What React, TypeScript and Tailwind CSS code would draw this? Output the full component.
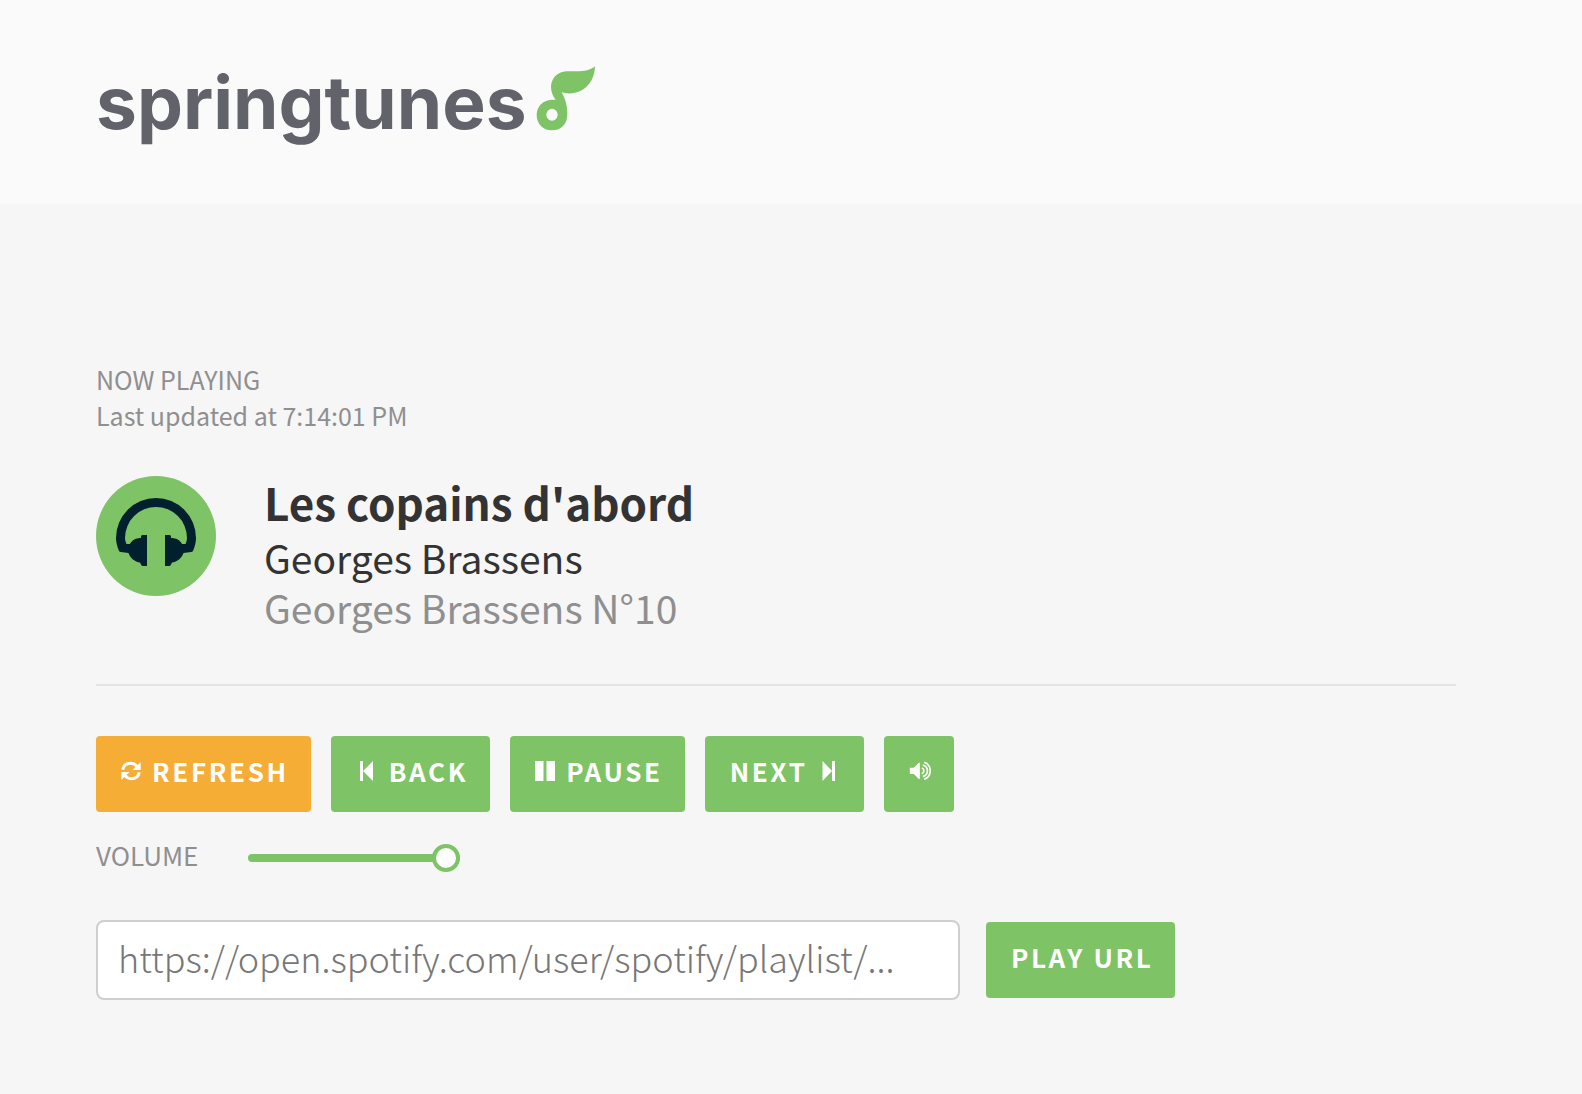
import React, { useState } from "react";

const buttonBase =
  "flex h-[76px] cursor-pointer items-center rounded pr-[22px] pb-1.5 pl-[25px] text-[26px] leading-8 font-semibold tracking-widest whitespace-nowrap text-white uppercase";
const greenButton = `${buttonBase} bg-[#7ec366]`;
const orangeButton = `${buttonBase} bg-[#f5ad35]`;

function LeafNote() {
  return (
    <svg viewBox="46 32 180 195" className="mb-2 ml-[9px] h-[65px] w-[60px]" aria-hidden="true">
      <path
        fill="#7ec366"
        fillRule="evenodd"
        d="M223 33C211 44 190 48 168 48C150 48 140 47 128 49C106 53 91 72 91 95C91 111 98 124 105 134C70 130 48 152 48 179C48 205 67 225 93 225C123 225 140 205 140 176C140 150 134 131 123 111C142 117 166 115 185 104C209 89 222 65 223 33ZM94 160A17 18 0 1 1 94 196A17 18 0 1 1 94 160Z"
      />
    </svg>
  );
}

function Headphones() {
  return (
    <svg viewBox="0 0 120 120" className="size-[120px] shrink-0" aria-hidden="true">
      <circle cx="60" cy="60" r="60" fill="#7ec366" />
      <path
        fill="#00202e"
        d="M23 75C21 70 20 66 20 62A40 40 0 0 1 100 62C100 66 99 70 97 75Q96.500 76 95 76L87.500 77C86 82 81 86 76 86.500L75 88.500Q74.500 90 73 90H69V59H73.500Q75 59 75 60.500V62C80 62 84 64 86 68H89.500C90.500 66 91 64 91 62A31 31 0 0 0 29 62C29 64 29.500 66 30.500 68H34C36 64 40 62 45 62V60.500Q45 59 46.500 59H51V90H47Q45.500 90 45 88.500L44 86.500C39 86 34 82 32.500 77L25 76Q23.500 76 23 75Z"
      />
    </svg>
  );
}

function RefreshIcon() {
  return (
    <svg viewBox="0 0 60 60" className="mr-[11px] size-5" aria-hidden="true">
      <path d="M5 26C8 13 18 7 29 7C37 7 44 11 49 18" fill="none" stroke="white" strokeWidth="9" />
      <path d="M59 3V27H34Z" fill="white" />
      <g transform="rotate(180 30 30)">
        <path d="M5 26C8 13 18 7 29 7C37 7 44 11 49 18" fill="none" stroke="white" strokeWidth="9" />
        <path d="M59 3V27H34Z" fill="white" />
      </g>
    </svg>
  );
}

function BackIcon() {
  return (
    <svg viewBox="0 0 14 20" className="mr-[15px] ml-1 h-5 w-3.5" fill="white" aria-hidden="true">
      <path d="M0 0H3V20H0ZM13 0V20L3 10Z" />
    </svg>
  );
}

function PauseIcon() {
  return (
    <svg viewBox="0 0 20 20" className="mr-[11px] size-5" fill="white" aria-hidden="true">
      <path d="M0 0H8.500V20H0ZM11.500 0H20V20H11.500Z" />
    </svg>
  );
}

function NextIcon() {
  return (
    <svg viewBox="0 0 14 20" className="mr-1.5 ml-3.5 h-5 w-3.5" fill="white" aria-hidden="true">
      <path d="M10 0H13V20H10ZM0.500 0V20L10 10Z" />
    </svg>
  );
}

function SpeakerIcon() {
  return (
    <svg viewBox="0 0 66 60" className="h-5 w-[23px]" fill="none" aria-hidden="true">
      <path d="M1 20H13L28 5H31V54H28L13 39H1Z" fill="white" />
      <path
        d="M37 21A9 9 0 0 1 37 38M40 12A18 18 0 0 1 40 47M44 4A27 27 0 0 1 44 55"
        stroke="white"
        strokeWidth="5"
      />
    </svg>
  );
}

export default function App() {
  const [volume, setVolume] = useState(100);
  const [url, setUrl] = useState("");

  return (
    <div className="min-h-screen bg-[#f6f6f6] font-['Noto_Sans_CJK_SC','Noto_Sans',sans-serif] text-[#333]">
      <header className="flex h-51 items-center bg-[#fafafa] px-24">
        <span className="font-['Inter',sans-serif] text-[73px] leading-none font-bold text-[#62626a]">
          springtunes
        </span>
        <LeafNote />
      </header>

      <main className="pt-[157px] pr-[126px] pb-10 pl-24">
        <div className="text-[25px] leading-9 text-[#8f8f8f]">
          <p>NOW PLAYING</p>
          <p>Last updated at 7:14:01 PM</p>
        </div>

        <section className="mt-[43px] flex gap-12 border-b-2 border-[#e4e4e4] pb-[52px]">
          <Headphones />
          <div className="text-[39px] leading-[50px]">
            <h1 className="pb-1 text-[44px] leading-[52px] font-semibold">Les copains d'abord</h1>
            <p>Georges Brassens</p>
            <p className="text-[#8f8f8f]">Georges Brassens N°10</p>
          </div>
        </section>

        <div className="mt-[50px] flex flex-wrap gap-5">
          <button type="button" className={orangeButton}>
            <RefreshIcon />
            Refresh
          </button>
          <button type="button" className={greenButton}>
            <BackIcon />
            Back
          </button>
          <button type="button" className={greenButton}>
            <PauseIcon />
            Pause
          </button>
          <button type="button" className={greenButton}>
            Next
            <NextIcon />
          </button>
          <button type="button" aria-label="Mute" className={greenButton}>
            <SpeakerIcon />
          </button>
        </div>

        <div className="mt-8 flex h-7 items-start">
          <label htmlFor="volume" className="w-38 text-[26px] leading-[22px] text-[#8f8f8f]">
            VOLUME
          </label>
          <input
            id="volume"
            type="range"
            min={0}
            max={100}
            value={volume}
            onChange={(e) => setVolume(Number(e.target.value))}
            className="h-7 w-[212px] cursor-pointer appearance-none bg-transparent [&::-webkit-slider-runnable-track]:h-2 [&::-webkit-slider-runnable-track]:rounded-full [&::-webkit-slider-runnable-track]:bg-[#7ec366] [&::-webkit-slider-thumb]:-mt-2.5 [&::-webkit-slider-thumb]:size-7 [&::-webkit-slider-thumb]:appearance-none [&::-webkit-slider-thumb]:rounded-full [&::-webkit-slider-thumb]:border-4 [&::-webkit-slider-thumb]:border-[#7ec366] [&::-webkit-slider-thumb]:bg-white"
          />
        </div>

        <form className="mt-12 flex items-center gap-[26px]" onSubmit={(e) => e.preventDefault()}>
          <input
            type="text"
            aria-label="Playlist URL"
            value={url}
            onChange={(e) => setUrl(e.target.value)}
            placeholder="https://open.spotify.com/user/spotify/playlist/..."
            className="h-20 max-w-[864px] min-w-0 flex-1 rounded-lg border-2 border-[#cfcfcf] bg-white px-5 pb-1.5 text-4xl font-light placeholder:text-[#777]"
          />
          <button type="submit" className={greenButton}>
            Play URL
          </button>
        </form>
      </main>
    </div>
  );
}
